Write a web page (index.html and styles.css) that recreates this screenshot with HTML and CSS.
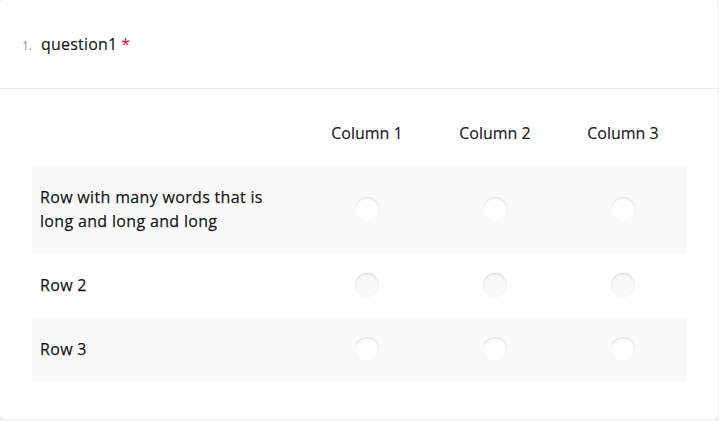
FILE: index.html
```html
<!DOCTYPE html>
<html>
<head>
<meta charset="utf-8">
<link rel="stylesheet" href="styles.css">
</head>
<body>
<div class="card">
  <div class="q-header">
    <span class="q-num">1.</span>
    <span class="q-title">question1</span>
    <span class="q-req">*</span>
  </div>
  <div class="q-content">
    <table class="matrix">
      <thead>
        <tr>
          <th class="label-col"></th>
          <th>Column 1</th>
          <th>Column 2</th>
          <th>Column 3</th>
        </tr>
      </thead>
      <tbody>
        <tr class="alt">
          <td class="row-label">Row with many words that is long and long and long</td>
          <td><span class="radio"></span></td>
          <td><span class="radio"></span></td>
          <td><span class="radio"></span></td>
        </tr>
        <tr>
          <td class="row-label">Row 2</td>
          <td><span class="radio"></span></td>
          <td><span class="radio"></span></td>
          <td><span class="radio"></span></td>
        </tr>
        <tr class="alt">
          <td class="row-label">Row 3</td>
          <td><span class="radio"></span></td>
          <td><span class="radio"></span></td>
          <td><span class="radio"></span></td>
        </tr>
      </tbody>
    </table>
  </div>
</div>
</body>
</html>
```
FILE: styles.css
```css
html, body {
  margin: 0;
  padding: 0;
  background: #f3f3f3;
}
body {
  font-family: "Open Sans", "Liberation Sans", sans-serif;
  color: rgba(0, 0, 0, 0.91);
}
.card {
  width: 718px;
  height: 419px;
  background: #ffffff;
  border-radius: 4px;
  box-shadow: 0 1px 2px rgba(0, 0, 0, 0.15);
  box-sizing: border-box;
}
.q-header {
  height: 89px;
  box-sizing: border-box;
  padding: 32px 0 0 22px;
  border-bottom: 1px solid #e9e9e9;
  display: flex;
  align-items: baseline;
  font-size: 16px;
  line-height: 24px;
}
.q-num {
  font-size: 12px;
  color: #909090;
  width: 19px;
}
.q-title {
  color: rgba(0, 0, 0, 0.91);
  letter-spacing: 0.2px;
  -webkit-text-stroke: 0.2px rgba(0, 0, 0, 0.9);
}
.q-req {
  color: #e60a3e;
  margin-left: 4px;
}
.q-content {
  padding: 12px 32px 0 32px;
}
.matrix {
  border-collapse: collapse;
  border-spacing: 0;
  width: 655px;
  font-size: 16px;
  line-height: 24px;
}
.matrix th {
  font-weight: 400;
  padding: 20px 0;
  text-align: center;
  width: 128px;
  -webkit-text-stroke: 0.2px rgba(0, 0, 0, 0.9);
}
.matrix th.label-col {
  width: auto;
}
.matrix td {
  padding: 20px 0;
  text-align: center;
  vertical-align: middle;
}
.matrix td.row-label {
  text-align: left;
  font-weight: 400;
  letter-spacing: 0.33px;
  -webkit-text-stroke: 0.25px rgba(0, 0, 0, 0.9);
  padding: 20px 30px 20px 8px;
}
.matrix tr.alt td {
  background: #f9f9f9;
}
.radio {
  display: block;
  margin: 0 auto;
  width: 24px;
  height: 24px;
  border-radius: 50%;
  background: #f9f9f9;
  box-shadow: inset 0 1px 2px rgba(0, 0, 0, 0.15);
}
.matrix tr.alt .radio {
  background: #ffffff;
}
```
